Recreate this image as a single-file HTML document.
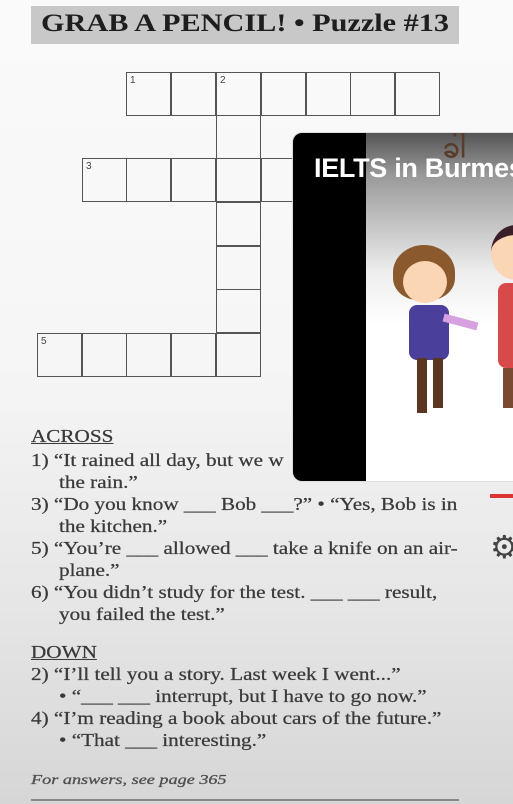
<!DOCTYPE html>
<html><head><style>
*{margin:0;padding:0;box-sizing:border-box}
body{width:513px;height:804px;overflow:hidden;position:relative;background:linear-gradient(#fafafa 0%,#f6f6f6 45%,#e6e6e6 75%,#d6d6d6 100%);font-family:"Liberation Serif",serif;color:#333}
.t{position:absolute;left:31px;top:6px;width:428px;height:38px;background:#c8c8c8}
.t span{position:absolute;left:10px;top:0;font-weight:bold;font-size:25px;color:#1e1e1e;line-height:36px;white-space:nowrap;transform:scaleX(1.21);transform-origin:left}
.c{position:absolute;width:45px;height:44px;border:1.5px solid #555}
.n{position:absolute;font:10px "Liberation Sans",sans-serif;left:3px;top:2px;color:#444}
.l{position:absolute;left:31px;font-size:17.5px;line-height:22px;white-space:nowrap;color:#3a3a3a;transform:scaleX(1.21);transform-origin:left;-webkit-text-stroke:0.25px #3a3a3a}
.i{left:59px}
.ov{position:absolute;z-index:5;left:292px;top:132px;width:240px;height:350px;border-radius:10px;overflow:hidden;background:#fff;border:1px solid #ddd}
</style></head><body>
<div class="t"><span>GRAB A PENCIL! • Puzzle #13</span></div>
<div class="c" style="left:126px;top:72px"><span class="n">1</span></div>
<div class="c" style="left:171px;top:72px"></div>
<div class="c" style="left:216px;top:72px"><span class="n">2</span></div>
<div class="c" style="left:261px;top:72px"></div>
<div class="c" style="left:306px;top:72px"></div>
<div class="c" style="left:350px;top:72px"></div>
<div class="c" style="left:395px;top:72px"></div>
<div class="c" style="left:216px;top:115px"></div>
<div class="c" style="left:216px;top:202px"></div>
<div class="c" style="left:216px;top:246px"></div>
<div class="c" style="left:216px;top:289px"></div>
<div class="c" style="left:82px;top:158px"><span class="n">3</span></div>
<div class="c" style="left:126px;top:158px"></div>
<div class="c" style="left:171px;top:158px"></div>
<div class="c" style="left:216px;top:158px"></div>
<div class="c" style="left:261px;top:158px"></div>
<div class="c" style="left:37px;top:333px"><span class="n">5</span></div>
<div class="c" style="left:82px;top:333px"></div>
<div class="c" style="left:126px;top:333px"></div>
<div class="c" style="left:171px;top:333px"></div>
<div class="c" style="left:216px;top:333px"></div>

<div class="ov">
 <div style="position:absolute;left:0;top:0;width:73px;height:350px;background:#000"></div>
 <div style="position:absolute;left:73px;top:0;width:170px;height:350px;background:linear-gradient(#555 0%,#999 12%,#eee 40%,#fff 55%)"></div>
 <div style="position:absolute;left:150px;top:-6px;font:bold 30px 'Liberation Sans',sans-serif;color:#5a3a2a">ခါ</div>
 <div style="position:absolute;left:21px;top:20px;font:bold 27px 'Liberation Sans',sans-serif;color:#fff;white-space:nowrap;letter-spacing:-0.3px">IELTS in Burmese</div>
 <div style="position:absolute;left:100px;top:112px;width:62px;height:55px;border-radius:50% 50% 40% 40%;background:#8a5a2e"></div>
 <div style="position:absolute;left:110px;top:128px;width:44px;height:42px;border-radius:50%;background:#fbd6b4"></div>
 <div style="position:absolute;left:116px;top:172px;width:40px;height:55px;border-radius:8px;background:#4a3f9a"></div>
 <div style="position:absolute;left:124px;top:225px;width:10px;height:55px;background:#5a3520"></div>
 <div style="position:absolute;left:140px;top:225px;width:10px;height:50px;background:#5a3520"></div>
 <div style="position:absolute;left:150px;top:185px;width:35px;height:8px;background:#d7a0e0;transform:rotate(15deg)"></div>
 <div style="position:absolute;left:198px;top:92px;width:50px;height:55px;border-radius:50%;background:#fbd6b4;border-top:10px solid #3a1e2a"></div>
 <div style="position:absolute;left:205px;top:150px;width:40px;height:85px;border-radius:8px;background:#d84a4a"></div>
 <div style="position:absolute;left:210px;top:235px;width:30px;height:40px;background:#7a4a30"></div>
</div>

<div style="position:absolute;left:490px;top:494px;width:23px;height:4px;background:#d33"></div>
<div style="position:absolute;left:490px;top:528px;font:32px 'DejaVu Sans',sans-serif;color:#444">⚙</div>

<div class="l" style="top:425px;text-decoration:underline">ACROSS</div>
<div class="l" style="top:449px">1) “It rained all day, but we w</div>
<div class="l i" style="top:471px">the rain.”</div>
<div class="l" style="top:493px">3) “Do you know ___ Bob ___?” • “Yes, Bob is in</div>
<div class="l i" style="top:515px">the kitchen.”</div>
<div class="l" style="top:537px">5) “You’re ___ allowed ___ take a knife on an air-</div>
<div class="l i" style="top:559px">plane.”</div>
<div class="l" style="top:581px">6) “You didn’t study for the test. ___ ___ result,</div>
<div class="l i" style="top:603px">you failed the test.”</div>
<div class="l" style="top:641px;text-decoration:underline">DOWN</div>
<div class="l" style="top:663px">2) “I’ll tell you a story. Last week I went...”</div>
<div class="l i" style="top:685px">• “___ ___ interrupt, but I have to go now.”</div>
<div class="l" style="top:707px">4) “I’m reading a book about cars of the future.”</div>
<div class="l i" style="top:729px">• “That ___ interesting.”</div>
<div class="l" style="top:770px;font-style:italic;font-size:14px;color:#555;transform:scaleX(1.3)">For answers, see page 365</div>
<div style="position:absolute;left:31px;top:799px;width:428px;height:2px;background:#888"></div>
</body></html>
